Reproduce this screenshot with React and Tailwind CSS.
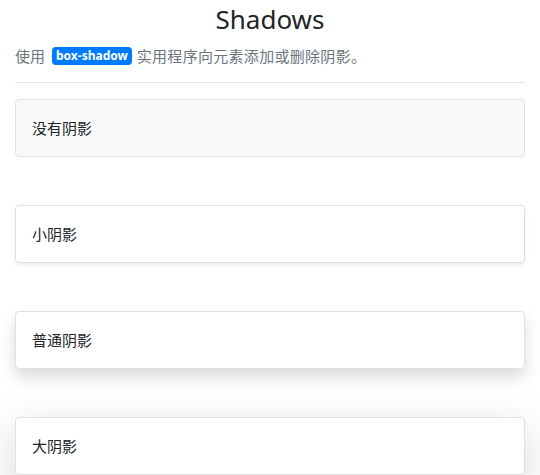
export default function App() {
  return (
    <div className="w-[540px] bg-white px-[15px] text-[#212529] [font-family:'Noto_Sans','Noto_Sans_CJK_SC',sans-serif]">
      <h3 className="pt-[2px] text-center text-[26px] leading-[34px] font-normal text-[#212529]">Shadows</h3>
      <p className="mt-[8px] flex items-center text-[15px] leading-[24px] text-[#6c757d]">
        <span>使用</span>
        <span className="mr-[5px] ml-[7px] rounded-[4px] bg-[#007bff] px-[4px] text-[12px] leading-[18px] font-bold text-white">box-shadow</span>
        <span className="tracking-[0.3px]">实用程序向元素添加或删除阴影。</span>
      </p>
      <hr className="mt-[14px] mb-[16px] border-t border-[#e5e5e5]" />
      <div className="flex flex-col gap-[48px]">
        <div className="rounded-[4px] border border-[#dee2e6] bg-[#f8f9fa] p-4 text-[15px] leading-[24px]">没有阴影</div>
        <div className="rounded-[4px] border border-[#dee2e6] bg-white p-4 text-[15px] leading-[24px] shadow-[0_2px_4px_rgba(0,0,0,0.075)]">小阴影</div>
        <div className="rounded-[4px] border border-[#dee2e6] bg-white p-4 text-[15px] leading-[24px] shadow-[0_8px_16px_rgba(0,0,0,0.15)]">普通阴影</div>
        <div className="rounded-[4px] border border-[#dee2e6] bg-white p-4 text-[15px] leading-[24px] shadow-[0_16px_48px_rgba(0,0,0,0.175)]">大阴影</div>
      </div>
    </div>
  );
}
